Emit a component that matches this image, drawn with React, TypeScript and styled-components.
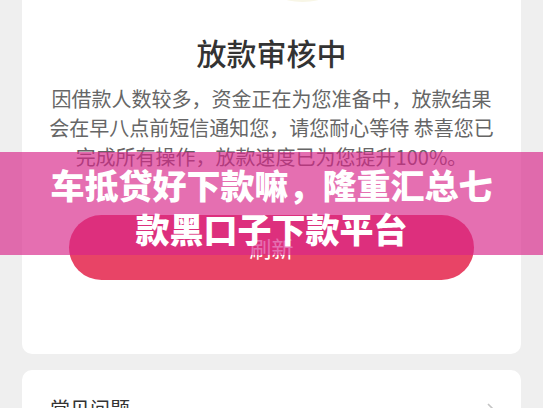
import React from "react";
import styled, { createGlobalStyle } from "styled-components";

const Global = createGlobalStyle`
  html, body { margin: 0; padding: 0; background: #efefef; }
  body { font-family: "Noto Sans CJK SC", "Noto Sans", sans-serif; overflow: hidden; }
`;

const Page = styled.div`
  position: relative;
  width: 543px;
  height: 408px;
  overflow: hidden;
  background: #efefef;
  padding: 0 22px;
  box-sizing: border-box;
  display: flex;
  flex-direction: column;
  gap: 16px;
`;

const Card = styled.div<{ $openTop?: boolean }>`
  background: #ffffff;
  border-radius: ${(p) => (p.$openTop ? "0 0 10px 10px" : "10px")};
  flex-shrink: 0;
`;

const StatusCard = styled(Card)`
  display: flex;
  flex-direction: column;
  align-items: center;
  padding: 0 25px 74px;
`;

const IconTail = styled.svg`
  display: block;
  width: 100%;
  height: 3px;
`;

const Title = styled.h1`
  margin: 29px 0 0;
  font-size: 30px;
  line-height: 40px;
  font-weight: 500;
  color: #333333;
`;

const Message = styled.p`
  margin: 12px 0 0;
  font-size: 20px;
  line-height: 29px;
  color: #666666;
  text-align: center;
`;

const RefreshButton = styled.button`
  margin-top: 44px;
  width: 405px;
  height: 65px;
  border: none;
  border-radius: 33px;
  background: #e84466;
  color: #ffffff;
  font-family: inherit;
  font-size: 22px;
  padding: 0 0 2px;
`;

const FaqCard = styled(Card)`
  display: flex;
  align-items: center;
  justify-content: space-between;
  padding: 25px 24px 20px 28px;
`;

const FaqLabel = styled.span`
  font-size: 20px;
  line-height: 28px;
  color: #333333;
`;

const Chevron = styled.svg`
  width: 10px;
  height: 16px;
  margin-top: 4px;
`;

const Banner = styled.div`
  position: absolute;
  left: 0;
  right: 0;
  top: 152px;
  height: 103px;
  background: rgba(215, 37, 137, 0.66);
  display: flex;
  align-items: center;
  justify-content: center;
  padding: 6px 40px 0;
  box-sizing: border-box;
`;

const BannerText = styled.h2`
  margin: 0;
  font-size: 34px;
  line-height: 44px;
  font-weight: 900;
  color: #ffffff;
  text-align: center;
`;

export default function App() {
  return (
    <>
      <Global />
      <Page>
        <StatusCard $openTop>
          <IconTail viewBox="0 0 455 3" preserveAspectRatio="none">
            <ellipse cx="259" cy="-3" rx="20" ry="5" fill="#f8f6e6" />
          </IconTail>
          <Title>放款审核中</Title>
          <Message>
            因借款人数较多，资金正在为您准备中，放款结果
            <br />
            会在早八点前短信通知您，请您耐心等待 恭喜您已
            <br />
            完成所有操作，放款速度已为您提升100%。
          </Message>
          <RefreshButton>刷新</RefreshButton>
        </StatusCard>
        <FaqCard>
          <FaqLabel>常见问题</FaqLabel>
          <Chevron viewBox="0 0 10 16">
            <polyline points="1,1 8,8 1,15" fill="none" stroke="#c4c4c4" strokeWidth="1.6" />
          </Chevron>
        </FaqCard>
        <Banner>
          <BannerText>车抵贷好下款嘛，隆重汇总七款黑口子下款平台</BannerText>
        </Banner>
      </Page>
    </>
  );
}
